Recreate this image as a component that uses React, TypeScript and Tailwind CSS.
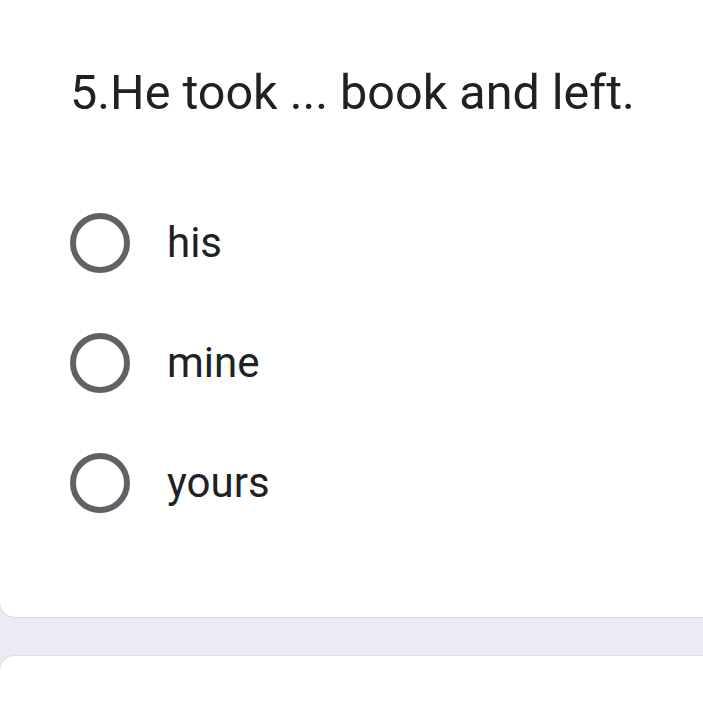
export default function App() {
  const options = ["his", "mine", "yours"];
  return (
    <div className="h-[704px] w-[703px] overflow-hidden bg-[#ede9f5] font-['Roboto',sans-serif]">
      <div className="-ml-px h-[618px] w-[730px] rounded-b-[16px] border border-t-0 border-[#dadce0] bg-white pl-[70px] pt-[63px]">
        <h2 className="text-[48.5px] leading-[60px] text-[#202124]">5.He took ... book and left.</h2>
        <div className="mt-[60px] flex flex-col">
          {options.map((o) => (
            <div key={o} className="flex h-[120px] items-center">
              <span className="h-[60px] w-[60px] shrink-0 rounded-full border-[6px] border-[#5f6368]" />
              <span className="ml-[37px] text-[42px] leading-none text-[#202124]">{o}</span>
            </div>
          ))}
        </div>
      </div>
      <div className="-ml-px mt-[37px] h-[100px] w-[730px] rounded-t-[16px] border border-b-0 border-[#dadce0] bg-white" />
    </div>
  );
}
